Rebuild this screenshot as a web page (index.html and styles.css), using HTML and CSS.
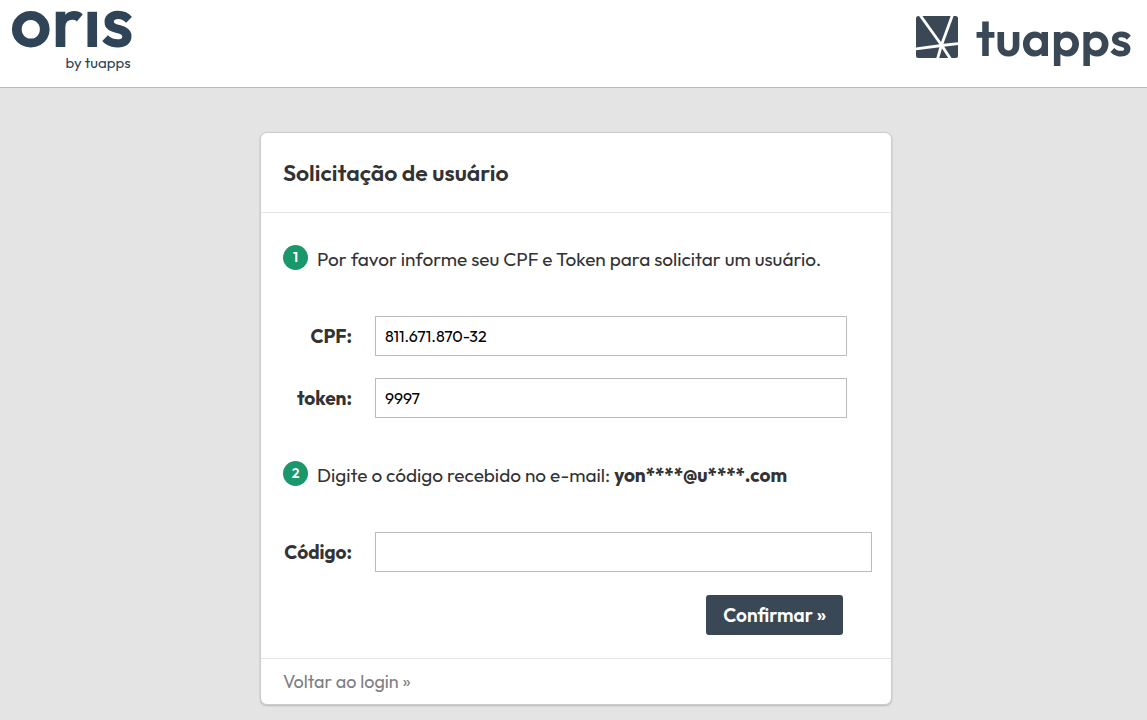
FILE: index.html
```html
<!DOCTYPE html>
<html lang="pt-BR">
<head>
  <meta charset="UTF-8">
  <meta name="viewport" content="width=device-width, initial-scale=1.0">
  <title>Solicitação de usuário</title>
  <link rel="stylesheet" href="styles.css">
</head>
<body>
  <header class="topbar">
    <div class="brand-oris">
      <span class="brand-oris-name">orıs</span>
      <span class="brand-oris-by">by tuapps</span>
    </div>
    <div class="brand-tuapps">
      <svg class="brand-tuapps-icon" viewBox="0 0 42 42" aria-hidden="true">
        <rect width="42" height="42" rx="2.500" fill="#3a4856"/>
        <g stroke="#fff" stroke-width="2.8" fill="none">
          <path d="M4 -1L25.500 29"/>
          <path d="M36.500 -1L25.500 29"/>
          <path d="M-1 33L25.500 29.500L43 27.500"/>
          <path d="M25.500 29L34.500 43"/>
          <path d="M25.500 29L21.500 43"/>
        </g>
      </svg>
      <span class="brand-tuapps-name">tuapps</span>
    </div>
  </header>

  <main class="page">
    <form class="card">
      <h1 class="card-title">Solicitação de usuário</h1>

      <div class="card-body">
        <div class="step">
          <span class="step-number">1</span>
          <p class="step-text">Por favor informe seu CPF e Token para solicitar um usuário.</p>
        </div>
        <div class="field">
          <label class="field-label" for="cpf">CPF:</label>
          <input class="field-input short" type="text" id="cpf" value="811.671.870-32">
        </div>
        <div class="field">
          <label class="field-label" for="token">token:</label>
          <input class="field-input short" type="text" id="token" value="9997">
        </div>

        <div class="step">
          <span class="step-number">2</span>
          <p class="step-text">Digite o código recebido no e-mail: <strong>yon****@u****.com</strong></p>
        </div>
        <div class="field">
          <label class="field-label" for="codigo">Código:</label>
          <input class="field-input" type="text" id="codigo">
        </div>

        <div class="actions">
          <button class="button" type="submit">Confirmar »</button>
        </div>
      </div>

      <div class="card-footer">
        <a class="back-link" href="#">Voltar ao login »</a>
      </div>
    </form>
  </main>
</body>
</html>
```
FILE: styles.css
```css
* {
  box-sizing: border-box;
}
body {
  margin: 0;
  background-color: #e4e4e4;
  color: #333;
  font-family: Outfit, Lato, sans-serif;
  font-size: 19px;
  line-height: 24px;
}

/* Header */
.topbar {
  display: flex;
  justify-content: space-between;
  align-items: flex-start;
  height: 88px;
  padding: 0 15px 0 10px;
  background-color: #fff;
  border-bottom: 1px solid #bbb;
}
.brand-oris {
  display: flex;
  flex-direction: column;
  align-items: flex-end;
  gap: 12px;
  color: #2f4557;
}
.brand-oris-name {
  font-size: 73px;
  font-weight: 600;
  line-height: 41px;
}
.brand-oris-by {
  padding-right: 3px;
  font-size: 15px;
  line-height: 20px;
}
.brand-tuapps {
  display: flex;
  align-items: flex-start;
  gap: 18px;
  padding-top: 16px;
  color: #3a4856;
}
.brand-tuapps-icon {
  width: 42px;
  height: 42px;
}
.brand-tuapps-name {
  font-size: 50px;
  font-weight: 600;
  line-height: 43px;
}

/* Card */
.page {
  display: flex;
  justify-content: center;
  padding: 44px 0 16px 5px;
}
.card {
  width: 100%;
  max-width: 632px;
  background-color: #fff;
  border: 1px solid #ccc;
  border-radius: 7px;
  box-shadow: 0 1px 2px rgba(0, 0, 0, 0.2);
}
.card-title {
  margin: 0;
  padding: 26px 22px;
  border-bottom: 1px solid #e4e4e4;
  font-size: 23px;
  font-weight: 600;
  line-height: 27px;
}
.card-body {
  padding: 32px 19px 23px 22px;
}
.step {
  display: flex;
  gap: 9px;
  margin-bottom: 45px;
}
.step-number {
  width: 25px;
  height: 25px;
  border-radius: 50%;
  background-color: #1a976b;
  color: #fff;
  font-size: 14px;
  font-weight: 600;
  line-height: 25px;
  text-align: center;
}
.step-text {
  margin: 0;
  padding-top: 2px;
}
.field {
  display: flex;
  align-items: center;
  gap: 23px;
  margin-bottom: 22px;
}
.field + .step {
  margin-top: 43px;
}
.field-label {
  width: 69px;
  font-weight: 700;
  text-align: right;
}
.field-input {
  flex: 1;
  min-width: 0;
  height: 40px;
  padding: 0 9px;
  border: 1px solid #bbb;
  background-color: #fff;
  color: #000;
  font-family: inherit;
  font-size: 16px;
}
.field-input.short {
  margin-right: 25px;
}
.actions {
  display: flex;
  justify-content: flex-end;
  padding: 1px 29px 0 0;
}
.button {
  height: 40px;
  padding: 0 17px;
  border: none;
  border-radius: 3px;
  background-color: #3a4856;
  color: #fff;
  font-family: inherit;
  font-size: 19px;
  font-weight: 600;
  cursor: pointer;
}
.button:hover {
  background-color: #2c3844;
}
.card-footer {
  padding: 10px 22px;
  border-top: 1px solid #e4e4e4;
}
.back-link {
  color: #808080;
  font-size: 18px;
  text-decoration: none;
}
```
